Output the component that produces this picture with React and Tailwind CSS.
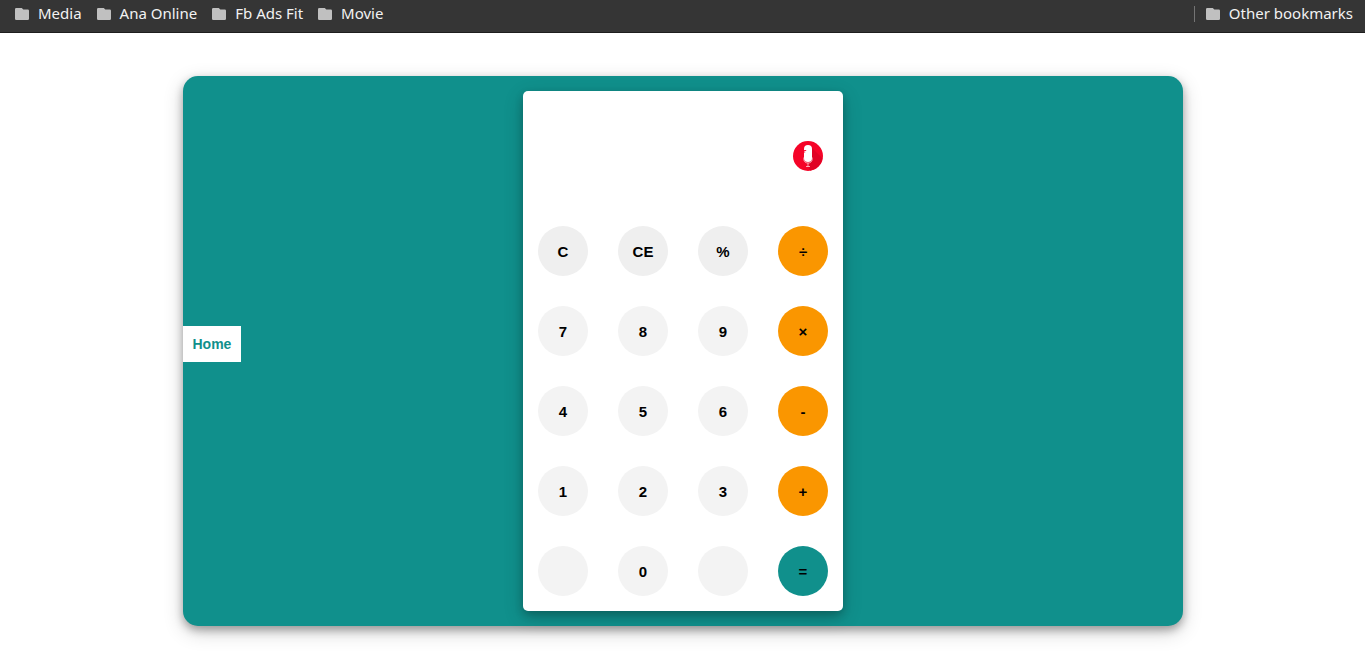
import React from "react";

const folders = ["Media", "Ana Online", "Fb Ads Fit", "Movie"];

const keyBase =
  "flex size-[50px] items-center justify-center rounded-full pt-[2px] pl-px text-[15px] leading-5 font-bold text-black";

const tones = {
  clear: "bg-[#efefef]",
  digit: "bg-[#f3f3f3]",
  operator: "bg-[#fa9600]",
  equals: "bg-[#10908c]",
};

const keys = [
  ["C", "clear"],
  ["CE", "clear"],
  ["%", "clear"],
  ["÷", "operator"],
  ["7", "digit"],
  ["8", "digit"],
  ["9", "digit"],
  ["×", "operator"],
  ["4", "digit"],
  ["5", "digit"],
  ["6", "digit"],
  ["-", "operator"],
  ["1", "digit"],
  ["2", "digit"],
  ["3", "digit"],
  ["+", "operator"],
  ["", "digit"],
  ["0", "digit"],
  ["", "digit"],
  ["=", "equals"],
];

function Folder({ label }) {
  return (
    <a href="#" className="flex items-center gap-[9px] whitespace-nowrap">
      <svg viewBox="0 0 14 12" className="h-3 w-[14px]" fill="#c0c0c0" aria-hidden="true">
        <path d="M1.300 0H6.800l1.500 1.500h4.500A1.200 1.200 0 0 1 14 2.700v8a1.300 1.300 0 0 1-1.300 1.300H1.300A1.300 1.300 0 0 1 0 10.700V1.300A1.300 1.300 0 0 1 1.300 0z" />
      </svg>
      <span className="pb-[2px]">{label}</span>
    </a>
  );
}

function MicIcon() {
  return (
    <svg viewBox="0 0 30 30" className="size-[30px]" aria-hidden="true">
      <circle cx="15" cy="15" r="15" fill="#f50428" />
      <path d="M18.500 6.500 29.300 17.300A15 15 0 0 1 17 29.850l-2-4.700z" fill="#e00324" />
      <path
        d="M10.800 16.500v1.300c0 2.800 1.700 4.200 4.200 4.200s4.200-1.400 4.200-4.200v-1.300M15 22v3.500M13 25.500h4"
        fill="none"
        stroke="#fff"
        strokeOpacity=".7"
        strokeWidth=".9"
      />
      <rect x="11" y="4" width="8" height="17" rx="4" fill="#fff" />
      <path d="M11 9.500h2.200M11 11h1.200" stroke="#f50428" strokeWidth=".9" />
    </svg>
  );
}

export default function App() {
  return (
    <div className="bg-white font-['Liberation_Sans',sans-serif]">
      <nav
        aria-label="Bookmarks"
        className="flex h-[33px] items-start justify-between border-b border-[#1e1e1e] bg-[#353535] pr-3 pl-[15px] pt-[3px] font-['Noto_Sans',sans-serif] text-[15px] leading-5 text-[#f2f2f2]"
      >
        <div className="flex gap-[15px]">
          {folders.map((f) => (
            <Folder key={f} label={f} />
          ))}
        </div>
        <div className="flex items-center gap-[11px]">
          <span className="h-4 w-px bg-[#747474]" />
          <Folder label="Other bookmarks" />
        </div>
      </nav>

      <main className="mx-auto mt-[43px] mb-[42px] grid max-w-[1000px] grid-cols-[1fr_320px_1fr] items-start rounded-[15px] bg-[#10908c] py-[15px] shadow-[0_4px_8px_rgba(0,0,0,0.3),0_6px_20px_rgba(0,0,0,0.19)]">
        <div className="flex pt-[235px]">
          <a
            href="#"
            className="bg-white px-[10px] py-2 text-[14px] leading-5 font-bold text-[#10908c]"
          >
            Home
          </a>
        </div>

        <section
          aria-label="Calculator"
          className="rounded-[5px] bg-white shadow-[0_4px_8px_rgba(0,0,0,0.2),0_6px_20px_rgba(0,0,0,0.19)]"
        >
          <div className="flex h-[120px] items-center pr-5 pt-[10px] pl-5">
            <output aria-label="Result" className="flex-1 text-right text-2xl font-bold" />
            <button type="button" aria-label="Voice input" className="rounded-full">
              <MicIcon />
            </button>
          </div>
          <div className="grid grid-cols-4 gap-[30px] p-[15px]">
            {keys.map(([label, tone], i) => (
              <button
                key={i}
                type="button"
                aria-label={label || "Unassigned"}
                className={`${keyBase} ${tones[tone]}`}
              >
                {label}
              </button>
            ))}
          </div>
        </section>
      </main>
    </div>
  );
}
